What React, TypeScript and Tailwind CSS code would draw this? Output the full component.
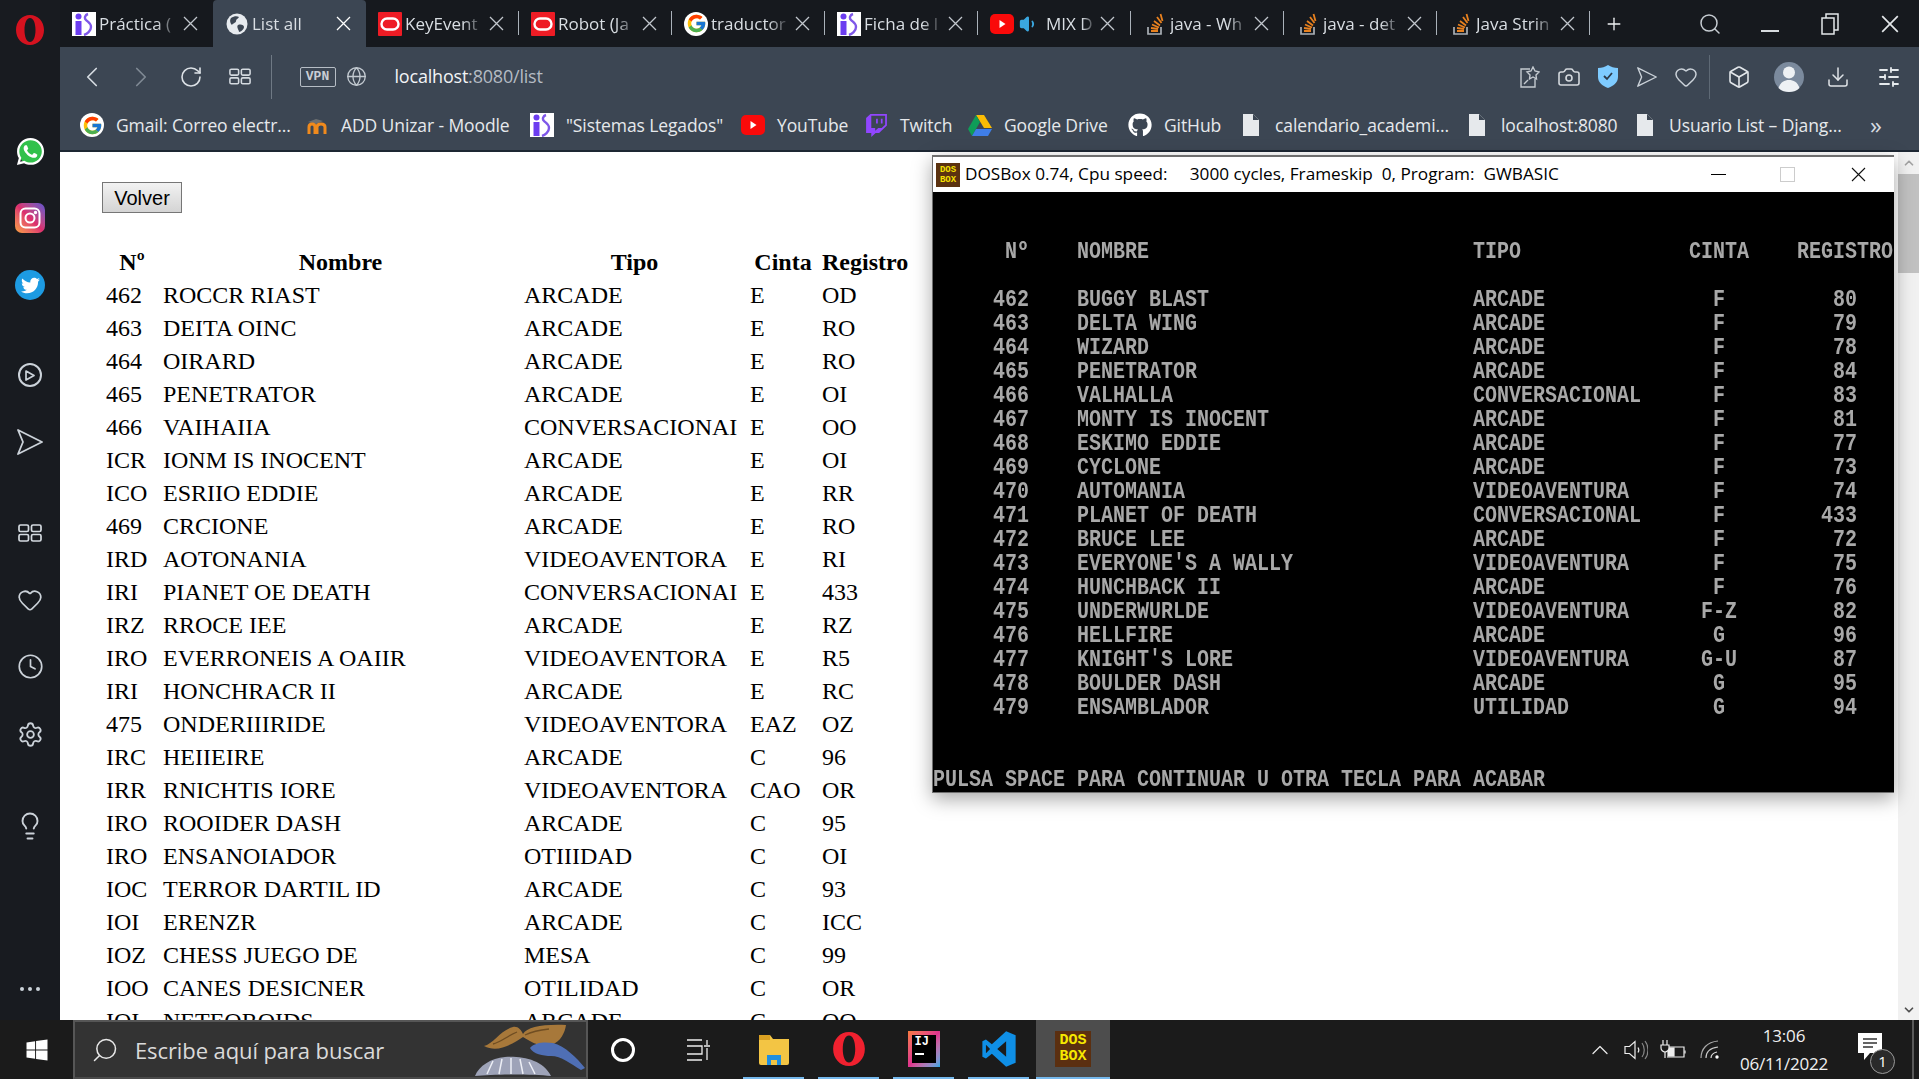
import React from 'react';
import {
  ChevronLeft, ChevronRight, RotateCw, Globe, Camera, Heart, Box, Download, SlidersHorizontal,
  Search, Plus, Clock, Settings, Lightbulb, ChevronUp, ChevronDown, Volume1,
} from 'lucide-react';
import { FcGoogle } from 'react-icons/fc';
import { FaGithub, FaTwitter, FaWhatsapp, FaWindows, FaTwitch } from 'react-icons/fa';

const XIcon = ({ s = 15, c = '#c9ced5', w = 1.3 }: { s?: number; c?: string; w?: number }) => (
  <svg width={s} height={s} viewBox="0 0 15 15"><path d="M1 1 14 14M14 1 1 14" stroke={c} strokeWidth={w} fill="none" /></svg>
);
const IsLogo = () => (
  <svg width="24" height="24" viewBox="0 0 24 24" className="shrink-0">
    <rect width="24" height="24" fill="#fff" />
    <circle cx="6.5" cy="4.5" r="3" fill="#6c3df0" />
    <path d="M3.5 9h6v14h-6z" fill="#6c3df0" />
    <path d="M16 2c-3 1-4 4-2 6s5 3 5 7-4 7-7 8" fill="none" stroke="#7e57e8" strokeWidth="2.4" />
  </svg>
);
const OracleLogo = () => (
  <svg width="24" height="24" viewBox="0 0 24 24" className="shrink-0">
    <rect width="24" height="24" rx="1" fill="#ee1c25" />
    <rect x="3.5" y="6.5" width="17" height="11" rx="5.5" fill="none" stroke="#fff" strokeWidth="2.4" />
  </svg>
);
const GoogleIcon = () => (
  <span className="flex h-[24px] w-[24px] shrink-0 items-center justify-center rounded-full bg-white"><FcGoogle size={21} /></span>
);
const WebIcon = () => (
  <svg width="22" height="22" viewBox="0 0 22 22" className="shrink-0">
    <circle cx="11" cy="11" r="10.5" fill="#e7ebef" />
    <path d="M5 5c3-2 6-2 8-1-1 2-3 2-3 4s-3 2-4 4c-1-1-3-4-1-7zM12 12c3-1 6 0 6 2s-3 5-5 5c0-2-3-5-1-7z" fill="#3c4653" />
  </svg>
);
const YouTubeIcon = () => (
  <svg width="24" height="24" viewBox="0 0 24 24" className="shrink-0">
    <rect x="0" y="2" width="24" height="20" rx="5" fill="#fa0a0a" />
    <path d="M9.5 8v8l6-4z" fill="#fff" />
  </svg>
);
const SoIcon = () => (
  <svg width="18" height="24" viewBox="0 0 18 24" className="shrink-0">
    <path d="M2 15v7h13v-7" fill="none" stroke="#aab0b6" strokeWidth="1.7" />
    <path d="M5 19h7M5 16l7 1M6 12.500l7 3M8 9l6 4.500M11 5l4.500 6M14.500 2l2 7" fill="none" stroke="#e8811f" strokeWidth="1.8" />
  </svg>
);
const MoodleIcon = () => (
  <svg width="24" height="24" viewBox="0 0 24 24" className="shrink-0">
    <path d="M3 9l8-3 7 2-7 3z" fill="#6d6f71" />
    <path d="M4 21v-7c0-4 6-4 6 0v7M12 21v-7c0-4 8-4 8 0v7" fill="none" stroke="#f08a1d" strokeWidth="3" />
  </svg>
);
const DriveIcon = () => (
  <svg width="24" height="22" viewBox="0 0 24 22" className="shrink-0">
    <path d="M8 1h8l8 13h-8z" fill="#fbbc04" /><path d="M8 1l4 7-8 14-4-7z" fill="#0f9d58" /><path d="M8 15h16l-4 7H4z" fill="#3f7ee8" />
  </svg>
);
const DocIcon = () => (
  <svg width="16" height="22" viewBox="0 0 16 22" className="shrink-0"><path d="M0 0h10l6 6v16H0z" fill="#e6e9ec" /><path d="M10 0v6h6" fill="#3c4653" /></svg>
);
const SendIcon = ({ s = 26 }: { s?: number }) => (
  <svg width={s} height={s} viewBox="0 0 26 26" fill="none" stroke="#cbd2d9" strokeWidth="1.8"><path d="M1 1 25 13 1 25 6 13z" strokeLinejoin="round" /></svg>
);
const GridIcon = ({ w = 24, h = 18 }: { w?: number; h?: number }) => (
  <svg width={w} height={h} viewBox="0 0 24 18" fill="none" stroke="#d4dae0" strokeWidth="1.7">
    <rect x="1" y="1" width="9.500" height="6.500" rx="1.500" /><rect x="13.500" y="1" width="9.500" height="6.500" rx="1.500" />
    <rect x="1" y="10.500" width="9.500" height="6.500" rx="1.500" /><rect x="13.500" y="10.500" width="9.500" height="6.500" rx="1.500" />
  </svg>
);
const OperaLogo = ({ s = 30, light = false }: { s?: number; light?: boolean }) => (
  <svg width={s} height={s} viewBox="0 0 30 30">
    <path fillRule="evenodd" d="M15 0C7 0 1 6.500 1 15s6 15 14 15 14-6.500 14-15S23 0 15 0zm0 3c3.500 0 5.500 5.500 5.500 12S18.500 27 15 27 9.500 21.500 9.500 15 11.500 3 15 3z" fill={light ? '#f0212f' : '#d5121f'} />
  </svg>
);
const VsCodeIcon = () => (
  <svg width="38" height="38" viewBox="0 0 32 32">
    <path fillRule="evenodd" d="M22 1l8 3.500v23L22 31 10 20l-5 4-3-1.500v-13L5 8l5 4zm0 8.500L14.500 16l7.500 6.500zM5 12.500v7l3.500-3.500z" fill="#0f8fe6" />
  </svg>
);

const tabs: { t: string; icon: React.ReactNode; active?: boolean; sep?: boolean; sound?: boolean }[] = [
  { t: 'Práctica (', icon: <IsLogo /> },
  { t: 'List all', icon: <WebIcon />, active: true },
  { t: 'KeyEvent', icon: <OracleLogo />, sep: true },
  { t: 'Robot (Ja', icon: <OracleLogo />, sep: true },
  { t: 'traductor', icon: <GoogleIcon />, sep: true },
  { t: 'Ficha de l', icon: <IsLogo />, sep: true },
  { t: 'MIX D', icon: <YouTubeIcon />, sep: true, sound: true },
  { t: 'java - Wh', icon: <SoIcon />, sep: true },
  { t: 'java - det', icon: <SoIcon />, sep: true },
  { t: 'Java Strin', icon: <SoIcon />, sep: true },
];

const bookmarks: { t: string; w: string; icon: React.ReactNode }[] = [
  { t: 'Gmail: Correo electr...', w: 'w-[225px]', icon: <GoogleIcon /> },
  { t: 'ADD Unizar - Moodle', w: 'w-[225px]', icon: <MoodleIcon /> },
  { t: '"Sistemas Legados"', w: 'w-[211px]', icon: <IsLogo /> },
  { t: 'YouTube', w: 'w-[123px]', icon: <YouTubeIcon /> },
  { t: 'Twitch', w: 'w-[104px]', icon: <FaTwitch size={23} color="#9146ff" /> },
  { t: 'Google Drive', w: 'w-[160px]', icon: <DriveIcon /> },
  { t: 'GitHub', w: 'w-[111px]', icon: <FaGithub size={24} color="#fff" /> },
  { t: 'calendario_academi...', w: 'w-[226px]', icon: <DocIcon /> },
  { t: 'localhost:8080', w: 'w-[168px]', icon: <DocIcon /> },
  { t: 'Usuario List – Djang...', w: 'w-[242px]', icon: <DocIcon /> },
];

const rows = [
  ['462', 'ROCCR RIAST', 'ARCADE', 'E', 'OD'],
  ['463', 'DEITA OINC', 'ARCADE', 'E', 'RO'],
  ['464', 'OIRARD', 'ARCADE', 'E', 'RO'],
  ['465', 'PENETRATOR', 'ARCADE', 'E', 'OI'],
  ['466', 'VAIHAIIA', 'CONVERSACIONAI', 'E', 'OO'],
  ['ICR', 'IONM IS INOCENT', 'ARCADE', 'E', 'OI'],
  ['ICO', 'ESRIIO EDDIE', 'ARCADE', 'E', 'RR'],
  ['469', 'CRCIONE', 'ARCADE', 'E', 'RO'],
  ['IRD', 'AOTONANIA', 'VIDEOAVENTORA', 'E', 'RI'],
  ['IRI', 'PIANET OE DEATH', 'CONVERSACIONAI', 'E', '433'],
  ['IRZ', 'RROCE IEE', 'ARCADE', 'E', 'RZ'],
  ['IRO', 'EVERRONEIS A OAIIR', 'VIDEOAVENTORA', 'E', 'R5'],
  ['IRI', 'HONCHRACR II', 'ARCADE', 'E', 'RC'],
  ['475', 'ONDERIIIRIDE', 'VIDEOAVENTORA', 'EAZ', 'OZ'],
  ['IRC', 'HEIIEIRE', 'ARCADE', 'C', '96'],
  ['IRR', 'RNICHTIS IORE', 'VIDEOAVENTORA', 'CAO', 'OR'],
  ['IRO', 'ROOIDER DASH', 'ARCADE', 'C', '95'],
  ['IRO', 'ENSANOIADOR', 'OTIIIDAD', 'C', 'OI'],
  ['IOC', 'TERROR DARTIL ID', 'ARCADE', 'C', '93'],
  ['IOI', 'ERENZR', 'ARCADE', 'C', 'ICC'],
  ['IOZ', 'CHESS JUEGO DE', 'MESA', 'C', '99'],
  ['IOO', 'CANES DESICNER', 'OTILIDAD', 'C', 'OR'],
  ['IOI', 'NETEOROIDS', 'ARCADE', 'C', 'OO'],
];

const dosRows = [
  ['462', 'BUGGY BLAST', 'ARCADE', 'F', '80'],
  ['463', 'DELTA WING', 'ARCADE', 'F', '79'],
  ['464', 'WIZARD', 'ARCADE', 'F', '78'],
  ['465', 'PENETRATOR', 'ARCADE', 'F', '84'],
  ['466', 'VALHALLA', 'CONVERSACIONAL', 'F', '83'],
  ['467', 'MONTY IS INOCENT', 'ARCADE', 'F', '81'],
  ['468', 'ESKIMO EDDIE', 'ARCADE', 'F', '77'],
  ['469', 'CYCLONE', 'ARCADE', 'F', '73'],
  ['470', 'AUTOMANIA', 'VIDEOAVENTURA', 'F', '74'],
  ['471', 'PLANET OF DEATH', 'CONVERSACIONAL', 'F', '433'],
  ['472', 'BRUCE LEE', 'ARCADE', 'F', '72'],
  ['473', "EVERYONE'S A WALLY", 'VIDEOAVENTURA', 'F', '75'],
  ['474', 'HUNCHBACK II', 'ARCADE', 'F', '76'],
  ['475', 'UNDERWURLDE', 'VIDEOAVENTURA', 'F-Z', '82'],
  ['476', 'HELLFIRE', 'ARCADE', 'G', '96'],
  ['477', "KNIGHT'S LORE", 'VIDEOAVENTURA', 'G-U', '87'],
  ['478', 'BOULDER DASH', 'ARCADE', 'G', '95'],
  ['479', 'ENSAMBLADOR', 'UTILIDAD', 'G', '94'],
];
const dosLine = (r: string[]) => {
  const c = r[3].length > 1 ? 64 : 65;
  const g = r[4].length > 2 ? 74 : 75;
  return (' '.repeat(5) + r[0]).padEnd(12) + r[1].padEnd(33) + r[2].padEnd(c - 45) + r[3].padEnd(g - c) + r[4];
};
const dosHeader = '      Nº'.padEnd(12) + 'NOMBRE'.padEnd(33) + 'TIPO'.padEnd(18) + 'CINTA'.padEnd(9) + 'REGISTRO';
const dosText = [
  '', '',
  dosHeader,
  '',
  ...dosRows.map(dosLine),
  '', '',
  'PULSA SPACE PARA CONTINUAR U OTRA TECLA PARA ACABAR',
].join('\n');

const sans = 'font-["Open_Sans",sans-serif]';

function Sidebar() {
  return (
    <aside className="flex w-[60px] shrink-0 flex-col items-center bg-[#181b20]">
      <div className="mt-[15px]"><OperaLogo /></div>
      <div className="mt-[90px] grid h-[32px] w-[32px] place-items-center">
        <span className="col-start-1 row-start-1 h-[25px] w-[25px] rounded-full bg-[#31c14b]" />
        <FaWhatsapp className="col-start-1 row-start-1" size={31} color="#fff" />
      </div>
      <div className="mt-[36px] flex h-[30px] w-[30px] items-center justify-center rounded-[7px] bg-gradient-to-tr from-[#f9a13a] via-[#dc2d6e] to-[#5b4fd0]">
        <svg width="22" height="22" viewBox="0 0 22 22" fill="none" stroke="#fff" strokeWidth="2"><rect x="1.500" y="1.500" width="19" height="19" rx="5" /><circle cx="11" cy="11" r="4.500" /><circle cx="16.500" cy="5.500" r=".7" fill="#fff" /></svg>
      </div>
      <div className="mt-[37px] flex h-[30px] w-[30px] items-center justify-center rounded-full bg-[#1d9be2]"><FaTwitter size={19} color="#fff" /></div>
      <div className="mt-[63px] flex h-[24px] w-[24px] items-center justify-center rounded-full border-2 border-[#cbd2d9]">
        <svg width="10" height="11" viewBox="0 0 10 11" fill="none" stroke="#cbd2d9" strokeWidth="1.700"><path d="M1 1l8 4.500L1 10z" strokeLinejoin="round" /></svg>
      </div>
      <div className="mt-[42px]"><SendIcon /></div>
      <div className="mt-[69px]"><GridIcon /></div>
      <Heart className="mt-[45px]" size={26} color="#cbd2d9" strokeWidth={1.6} />
      <Clock className="mt-[40px]" size={27} color="#cbd2d9" strokeWidth={1.500} />
      <Settings className="mt-[41px]" size={27} color="#cbd2d9" strokeWidth={1.600} />
      <Lightbulb className="mt-[63px]" size={30} color="#cbd2d9" strokeWidth={1.500} />
      <div className="mt-[146px] flex gap-[4px]">
        <span className="h-[4px] w-[4px] rounded-full bg-[#cbd2d9]" />
        <span className="h-[4px] w-[4px] rounded-full bg-[#cbd2d9]" />
        <span className="h-[4px] w-[4px] rounded-full bg-[#cbd2d9]" />
      </div>
    </aside>
  );
}

function TabStrip() {
  return (
    <div className={`flex h-[47px] shrink-0 items-stretch bg-[#16191e] text-[17px] ${sans}`}>
      {tabs.map((t, i) => (
        <div key={i} className={`relative flex w-[153px] shrink-0 items-center pl-[12px] ${t.active ? 'rounded-t-[4px] bg-[#3c4653]' : ''}`}>
          <div className="flex w-[24px] shrink-0 justify-center">{t.icon}</div>
          {t.sound && (
            <span className="ml-[5px] w-[19px] shrink-0"><Volume1 size={20} color="#3aa7e0" fill="#3aa7e0" /></span>
          )}
          <span className={`block overflow-hidden whitespace-nowrap text-[#d9dee3] [mask-image:linear-gradient(to_right,black_72%,transparent)] ${t.sound ? 'ml-[8px] w-[50px]' : 'ml-[3px] w-[80px]'}`}>{t.t}</span>
          <span className="ml-[4px]"><XIcon c={t.active ? '#fff' : '#c2c7cd'} /></span>
          {t.sep && <span className="absolute right-0 top-[11px] h-[24px] w-px bg-[#aab2ba]" />}
        </div>
      ))}
      <div className="ml-[14px] flex w-[20px] items-center justify-center"><Plus size={28} color="#f0f2f4" strokeWidth={1.6} /></div>
      <div className="ml-[72px] flex w-[28px] items-center justify-center"><Search size={24} color="#c6ccd2" strokeWidth={1.500} /></div>
      <div className="ml-[36px] flex w-[20px] items-center justify-center pt-[14px]"><span className="h-[2px] w-[18px] bg-[#d7dbdf]" /></div>
      <div className="ml-[40px] flex w-[20px] items-center justify-center">
        <svg width="18" height="22" viewBox="0 0 18 22" fill="none" stroke="#e4e7ea" strokeWidth="1.500"><rect x="1" y="5" width="12" height="16" /><path d="M5 5V1h12v16h-4" /></svg>
      </div>
      <div className="ml-[40px] flex w-[20px] items-center justify-center"><XIcon s={18} c="#e4e7ea" w={1.4} /></div>
    </div>
  );
}

function Toolbar() {
  const slot = 'flex h-full items-center justify-center shrink-0';
  return (
    <div className={`flex h-[59px] shrink-0 items-center ${sans}`}>
      <div className="w-[7.500px] shrink-0" />
      <div className={`${slot} w-[49px]`}><ChevronLeft size={34} color="#d4dae0" strokeWidth={1.2} /></div>
      <div className={`${slot} w-[49px]`}><ChevronRight size={34} color="#7f8994" strokeWidth={1.2} /></div>
      <div className={`${slot} ml-px w-[49px]`}><RotateCw size={24} color="#dce1e6" strokeWidth={1.6} /></div>
      <div className={`${slot} w-[49px]`}><GridIcon w={22} h={21} /></div>
      <span className="ml-[6px] h-[44px] w-px bg-[#6f7984]" />
      <div className="ml-[28px] flex h-[20px] w-[36px] shrink-0 items-center justify-center rounded-[2px] border border-[#b6bdc5] font-['Liberation_Mono',monospace] text-[13px] font-bold leading-none text-[#c9ced5]">VPN</div>
      <div className={`${slot} ml-[10px] w-[22px]`}><Globe size={21} color="#c2c9d0" strokeWidth={1.5} /></div>
      <div className="mb-[2px] ml-[27px] text-[18px] leading-none tracking-[-0.2px] text-[#f2f4f6]">localhost<span className="text-[#b4bbc3]">:8080/list</span></div>
      <div className="flex-1" />
      <div className={`${slot} w-[39px]`}>
        <svg width="20" height="22" viewBox="0 0 20 22" fill="none" stroke="#c4cad0" strokeWidth="1.400"><path d="M10 3H1v18h14v-8" /><path d="M13 1l2 4 4 1-3 3 .5 4-3.500-2-3.500 2 .5-4-3-3 4-1zM4 18l4-4" /></svg>
      </div>
      <div className={`${slot} w-[39px]`}><Camera size={24} color="#d3d8dd" strokeWidth={1.6} /></div>
      <div className={`${slot} w-[39px]`}>
        <svg width="20" height="23" viewBox="0 0 20 23"><path d="M10 0c3 2 6 3 10 3v9c0 6-5 9-10 11C5 21 0 18 0 12V3c4 0 7-1 10-3z" fill="#7ecbff" /><path d="M6 11l3 3 5-6" fill="none" stroke="#2d3a48" strokeWidth="1.800" /></svg>
      </div>
      <div className={`${slot} w-[39px]`}><SendIcon s={20} /></div>
      <div className={`${slot} w-[39px]`}><Heart size={24} color="#cbd2d9" strokeWidth={1.5} /></div>
      <span className="ml-[4px] h-[44px] w-px bg-[#5e6975]" />
      <div className={`${slot} w-[58px]`}><Box size={24} color="#e2e6ea" strokeWidth={1.6} /></div>
      <div className={`${slot} w-[42px]`}>
        <svg width="30" height="30" viewBox="0 0 30 30"><circle cx="15" cy="15" r="15" fill="#7b8a9d" /><circle cx="15" cy="10.500" r="6" fill="#eef1f4" /><path d="M4.500 26c2-6 6-8 10.500-8s8.500 2 10.500 8c-3 3-7 4-10.500 4s-7.500-1-10.500-4z" fill="#eef1f4" /></svg>
      </div>
      <div className={`${slot} w-[56px]`}><Download size={24} color="#dfe3e7" strokeWidth={1.5} /></div>
      <div className={`${slot} w-[46px]`}><SlidersHorizontal size={24} color="#e6eaed" strokeWidth={1.8} /></div>
      <div className="w-[7px] shrink-0" />
    </div>
  );
}

function Bookmarks() {
  return (
    <div className={`flex h-[38px] shrink-0 items-center pl-[20px] text-[17.500px] tracking-[-0.1px] text-[#e6e9ec] ${sans}`}>
      {bookmarks.map((b) => (
        <div key={b.t} className={`flex shrink-0 items-center gap-[12px] whitespace-nowrap ${b.w}`}>
          <span className="flex w-[24px] shrink-0 justify-center">{b.icon}</span>
          <span>{b.t}</span>
        </div>
      ))}
      <span className="ml-[-5px] text-[24px] leading-none text-[#d6dbe0]">»</span>
    </div>
  );
}

function Page() {
  return (
    <div className="flex min-h-0 flex-1 overflow-hidden border-t-2 border-[#1d2733] bg-white">
      <div className="min-w-0 flex-1 pl-[42px] pt-[30px] font-['Liberation_Serif',serif] text-[24px] leading-none text-black">
        <button className="h-[31px] w-[80px] rounded-none border border-[#767676] bg-gradient-to-b from-[#f2f2f2] to-[#d4d4d4] font-['Liberation_Sans',sans-serif] text-[20px] leading-none text-black">Volver</button>
        <table className="ml-[4px] mt-[32px] w-[802px] table-fixed border-collapse">
          <colgroup>
            <col className="w-[57px]" /><col className="w-[361px]" /><col className="w-[226px]" /><col className="w-[72px]" /><col className="w-[86px]" />
          </colgroup>
          <thead>
            <tr className="h-[33px]">
              <th className="pr-[5px] text-center font-bold">Nº</th>
              <th className="pr-[6px] text-center font-bold">Nombre</th>
              <th className="pr-[5px] text-center font-bold">Tipo</th>
              <th className="pr-[6px] text-center font-bold">Cinta</th>
              <th className="text-center font-bold">Registro</th>
            </tr>
          </thead>
          <tbody>
            {rows.map((r, i) => (
              <tr key={i} className="h-[33px]">
                {r.map((c, j) => <td key={j} className="whitespace-nowrap p-0">{c}</td>)}
              </tr>
            ))}
          </tbody>
        </table>
      </div>
      <div className="flex w-[21px] shrink-0 flex-col items-center bg-[#f1f1f1]">
        <div className="flex h-[22px] items-center"><ChevronUp size={14} color="#a3a3a3" strokeWidth={3} /></div>
        <div className="h-[99px] w-full bg-[#c1c1c1]" />
        <div className="flex-1" />
        <div className="flex h-[20px] items-center"><ChevronDown size={14} color="#505050" strokeWidth={3} /></div>
      </div>
    </div>
  );
}

function DosBox() {
  return (
    <div className="absolute left-[932px] top-[155px] flex h-[638px] w-[962px] flex-col border border-t-2 border-[#6e6e6e] border-r-0 bg-black shadow-[0_6px_18px_rgba(0,0,0,0.35)]">
      <div className={`flex h-[35px] shrink-0 items-center bg-white pl-[3px] text-[17.200px] text-black ${sans}`}>
        <div className="flex h-[24px] w-[24px] shrink-0 flex-col items-center justify-center bg-[#5b3210] font-['Liberation_Mono',monospace] text-[9px] font-bold leading-[10px] text-[#f6e200]">
          <span>DOS</span><span>BOX</span>
        </div>
        <span className="mb-[1px] ml-[5px] whitespace-pre">DOSBox 0.74, Cpu speed:     3000 cycles, Frameskip  0, Program:  GWBASIC</span>
        <div className="flex-1" />
        <span className="h-px w-[15px] bg-black" />
        <span className="ml-[54px] h-[15px] w-[15px] border border-[#cccccc]" />
        <span className="ml-[56px] mr-[28px]"><XIcon s={15} c="#111" w={1.1} /></span>
      </div>
      <div className="min-h-0 flex-1 overflow-hidden">
        <pre className="origin-top-left scale-x-[0.8333] whitespace-pre font-['Liberation_Mono',monospace] text-[24px] font-bold leading-[24px] text-[#a8a8a8]">{dosText}</pre>
      </div>
    </div>
  );
}

function Taskbar() {
  const slots: { icon: React.ReactNode; active?: boolean; w: string; bar: string }[] = [
    {
      w: 'w-[75px]', bar: 'mx-[7px]', icon: (
        <svg width="32" height="34" viewBox="0 0 32 34"><path d="M1 3h11l3 4h16v24a2 2 0 0 1-2 2H3a2 2 0 0 1-2-2z" fill="#f3c544" /><path d="M1 3h11v5H1z" fill="#d9a022" /><path d="M9 33V23h14v10h-4v-5h-6v5z" fill="#1f8fe0" /></svg>
      ),
    },
    { w: 'w-[75px]', bar: 'mx-[7px]', icon: <OperaLogo s={34} light /> },
    {
      w: 'w-[75px]', bar: 'mx-[7px]', icon: (
        <div className="relative h-[36px] w-[32px] bg-gradient-to-br from-[#f97a3a] via-[#e0318d] to-[#11a8e8]">
          <div className="absolute inset-[4px] bg-black pl-[3px] font-['Liberation_Mono',monospace] text-[12px] font-bold leading-[15px] text-white">IJ<div className="mt-[3px] h-[2px] w-[9px] bg-white" /></div>
        </div>
      ),
    },
    { w: 'w-[75px]', bar: 'mx-[7px]', icon: <VsCodeIcon /> },
    {
      w: 'w-[74px]', active: true, bar: '', icon: (
        <div className="flex h-[36px] w-[36px] flex-col items-center justify-center bg-[#5b2f10] font-['Liberation_Mono',monospace] text-[15px] font-bold leading-[16px] text-[#f6e800]">
          <span>DOS</span><span>BOX</span>
        </div>
      ),
    },
  ];
  return (
    <div className={`flex h-[59px] shrink-0 items-stretch bg-[#1b1b1b] text-white ${sans}`}>
      <div className="flex w-[73px] shrink-0 items-center justify-center"><FaWindows size={24} color="#fff" /></div>
      <div className="relative flex w-[515px] shrink-0 items-center border-2 border-b-[#4a4a4a] border-[#565656] bg-[#333333] pl-[16px]">
        <Search size={28} color="#e8e8e8" strokeWidth={1.300} className="scale-x-[-1]" />
        <span className="ml-[16px] whitespace-nowrap pt-[2px] text-[22px] tracking-[-0.1px] text-[#dadada]">Escribe aquí para buscar</span>
        <svg className="absolute right-0 top-0" width="113" height="55" viewBox="0 0 113 55">
          <path d="M11 24C20 22 28 8 40 5c5-1 8 3 10 7 4-7 20-10 43-9-1 7-5 17-15 20-10 3-20-3-28-8-8 5-24 17-39 9z" fill="#a7783a" />
          <path d="M52 13c6-3 14-5 24-6M20 22c8-2 14-8 24-12" stroke="#6f4d22" strokeWidth="1.300" fill="none" />
          <path d="M57 26c5-6 15-6 23-5 12 3 24 15 32 25l-4 2c-10-6-20-14-30-14-8 0-18-2-21-8z" fill="#4f6fb5" />
          <path d="M2 54c4-10 16-18 30-19 18-1 38 3 46 19-18-2-58-2-76 0z" fill="#9ea3b8" />
          <path d="M14 52l6-13M26 52l3-15M38 52V36M50 52l-3-15M62 52l-6-12" stroke="#eceef5" strokeWidth="1.500" />
        </svg>
      </div>
      <div className="flex w-[70px] shrink-0 items-center justify-center"><span className="h-[24px] w-[24px] rounded-full border-[3px] border-white" /></div>
      <div className="ml-[4px] flex w-[74px] shrink-0 items-center justify-center">
        <svg width="24" height="22" viewBox="0 0 24 22" fill="none" stroke="#eee" strokeWidth="1.300"><path d="M0 1h15M0 7h15v8H0M0 21h15M20 1v5M20 9v12M17 7h6" /></svg>
      </div>
      {slots.map((s, i) => (
        <div key={i} className={`flex shrink-0 flex-col ${s.w} ${s.active ? 'ml-0 bg-[#4d4d4d]' : ''}`}>
          <div className="flex flex-1 items-center justify-center">{s.icon}</div>
          <div className={`h-[2px] shrink-0 bg-[#76b9ed] ${s.bar}`} />
        </div>
      ))}
      <div className="flex-1" />
      <div className="flex w-[36px] shrink-0 items-center justify-center"><ChevronUp size={28} color="#e6e6e6" strokeWidth={1.100} /></div>
      <div className="flex w-[36px] shrink-0 items-center justify-center">
        <svg width="24" height="20" viewBox="0 0 24 20" fill="none" strokeWidth="1.200"><path d="M1 6.500h4.500L11 1.500v17L5.500 13.500H1z" stroke="#eee" /><path d="M14 7.500c1 1.500 1 3.500 0 5" stroke="#eee" /><path d="M18 3c3 4 3 10 0 14M21 1c4 5 4 13 0 18" stroke="#888" /></svg>
      </div>
      <div className="flex w-[38px] shrink-0 items-center justify-center">
        <svg width="26" height="20" viewBox="0 0 26 20" fill="none" stroke="#eee" strokeWidth="1.200"><path d="M7 7h17v10H7" /><rect x="8" y="8" width="6" height="8" fill="#eee" /><path d="M25 10.500v3" /><path d="M3 0v5M7 0v5" /><path d="M1 5h8v3c0 2-2 4-4 4s-4-2-4-4z" fill="#1b1b1b" /><path d="M5 12v6" /></svg>
      </div>
      <div className="flex w-[36px] shrink-0 items-center justify-center">
        <svg width="20" height="19" viewBox="0 0 20 19" fill="none" strokeWidth="1.200"><path d="M1 18C1 9 7 2 18 1" stroke="#aaa" /><path d="M6 18c0-6 4-10 12-11" stroke="#ccc" /><path d="M11 18c0-3 2-5 6-6" stroke="#ddd" /><circle cx="17" cy="17" r="1.700" fill="#fff" /></svg>
      </div>
      <div className="flex w-[112px] shrink-0 flex-col items-center justify-center text-[17px] leading-[28px] tracking-[-0.2px] text-[#f0f0f0]">
        <span>13:06</span><span>06/11/2022</span>
      </div>
      <div className="relative flex w-[62px] shrink-0 items-center justify-center">
        <svg width="24" height="30" viewBox="0 0 24 30" className="mb-[4px] ml-[-2px]"><path d="M0 0h24v20H12l-6 7v-7H0z" fill="#fff" /><path d="M5 6h14M5 10h14M5 14h10" stroke="#333" strokeWidth="1.300" /></svg>
        <span className="absolute left-[30px] top-[29px] flex h-[25px] w-[25px] items-center justify-center rounded-full border border-[#9a9a9a] bg-[#2a2a2a] text-[15px] leading-none">1</span>
      </div>
      <div className="w-[12px] shrink-0 border-r-2 border-[#5a5a5a]" />
      <div className="w-[5px] shrink-0" />
    </div>
  );
}

export default function App() {
  return (
    <div className="relative flex h-screen w-full flex-col overflow-hidden bg-white">
      <div className="flex min-h-0 flex-1">
        <Sidebar />
        <div className="flex min-w-0 flex-1 flex-col">
          <TabStrip />
          <div className="flex h-[103px] shrink-0 flex-col bg-[#3c4653]">
            <Toolbar />
            <Bookmarks />
          </div>
          <Page />
        </div>
      </div>
      <Taskbar />
      <DosBox />
    </div>
  );
}
